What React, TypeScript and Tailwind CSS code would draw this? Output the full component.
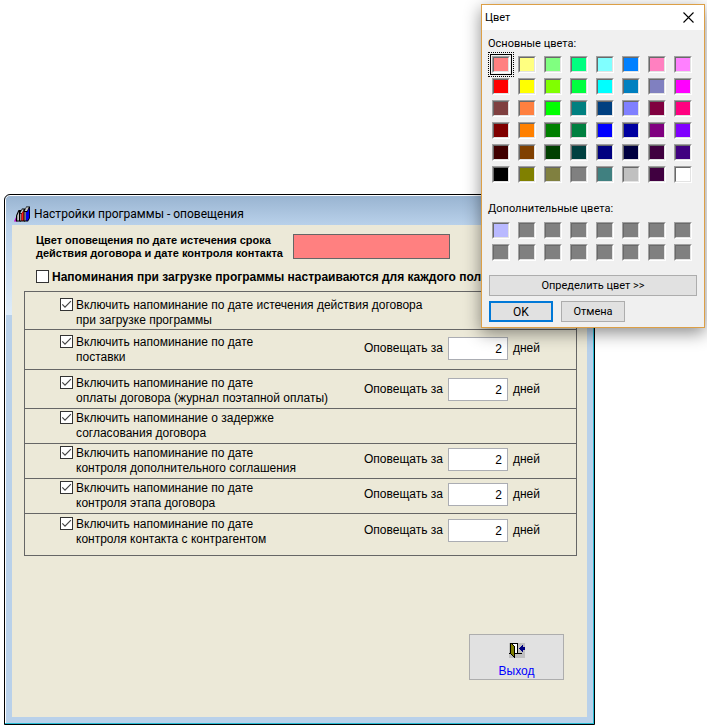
import React from "react";

type Reminder = {
  id: string;
  lines: [string, string];
  days?: number;
  row: string;
};

const reminders: Reminder[] = [
  { id: "expiry", lines: ["Включить напоминание по дате истечения действия договора", "при загрузке программы"], row: "h-[38px] pt-1.5" },
  { id: "delivery", lines: ["Включить напоминание по дате", "поставки"], days: 2, row: "h-[40px] pt-[5px]" },
  { id: "payment", lines: ["Включить напоминание по дате", "оплаты договора (журнал поэтапной оплаты)"], days: 2, row: "h-[39px] pt-1.5" },
  { id: "approval", lines: ["Включить напоминание о задержке", "согласования договора"], row: "h-[35px] pt-0.5" },
  { id: "addendum", lines: ["Включить напоминание по дате", "контроля дополнительного соглашения"], days: 2, row: "h-[35px] pt-0.5" },
  { id: "stage", lines: ["Включить напоминание по дате", "контроля этапа договора"], days: 2, row: "h-[35px] pt-0.5" },
  { id: "contact", lines: ["Включить напоминание по дате", "контроля контакта с контрагентом"], days: 2, row: "h-[42px] pt-[3px]" },
];

const basicColors = [
  "#ff8080", "#ffff80", "#80ff80", "#00ff80", "#80ffff", "#0080ff", "#ff80c0", "#ff80ff",
  "#ff0000", "#ffff00", "#80ff00", "#00ff40", "#00ffff", "#0080c0", "#8080c0", "#ff00ff",
  "#804040", "#ff8040", "#00ff00", "#008080", "#004080", "#8080ff", "#800040", "#ff0080",
  "#800000", "#ff8000", "#008000", "#008040", "#0000ff", "#0000a0", "#800080", "#8000ff",
  "#400000", "#804000", "#004000", "#004040", "#000080", "#000040", "#400040", "#400080",
  "#000000", "#808000", "#808040", "#808080", "#408080", "#c0c0c0", "#400040", "#ffffff",
];

const customColors = ["#b9b9ff", ...Array<string>(15).fill("#808080")];

function CheckBox({ id, checked = false }: { id: string; checked?: boolean }) {
  return (
    <span className="relative block size-[13px] shrink-0">
      <input
        id={id}
        type="checkbox"
        defaultChecked={checked}
        className="peer block size-[13px] appearance-none border border-[#333] bg-white"
      />
      <svg
        viewBox="0 0 13 13"
        className="pointer-events-none absolute inset-0 hidden size-[13px] peer-checked:block"
        fill="none"
        stroke="#444"
        strokeWidth="1.2"
      >
        <path d="M2.3 6.4 5 9.2 10.9 3.2" />
      </svg>
    </span>
  );
}

function ReminderRow({ id, lines, days, row }: Reminder) {
  return (
    <div className={`flex items-start border-b border-[#666] pl-[35px] text-xs leading-[15px] ${row}`}>
      <CheckBox id={id} checked />
      <label htmlFor={id} className="ml-[3px] min-w-0 flex-1 whitespace-nowrap">
        {lines[0]}
        <br />
        {lines[1]}
      </label>
      {days !== undefined && (
        <div className="mr-9 mt-0.5 flex items-center">
          <label htmlFor={`${id}-days`}>Оповещать за</label>
          <input
            id={`${id}-days`}
            type="text"
            defaultValue={days}
            className="mx-[5px] h-[23px] w-[60px] border border-[#abadb3] bg-white pr-[5px] text-right"
          />
          <span>дней</span>
        </div>
      )}
    </div>
  );
}

function Swatch({ color, selected = false }: { color: string; selected?: boolean }) {
  return (
    <button
      type="button"
      aria-label={color}
      className={`h-[17px] w-[18px] border border-b-white border-l-[#a0a0a0] border-r-white border-t-[#a0a0a0] ${
        selected ? "relative outline-1 outline-offset-1 outline-black" : ""
      }`}
    >
      <span
        className="block size-full border border-b-[#e3e3e3] border-l-[#696969] border-r-[#e3e3e3] border-t-[#696969]"
        style={{ backgroundColor: color }}
      />
      {selected && (
        <span className="pointer-events-none absolute -inset-[5px] border border-dotted border-black" />
      )}
    </button>
  );
}

function BooksIcon() {
  return (
    <svg viewBox="0 0 16 16" className="size-4 shrink-0">
      <path d="M0 15.5 2 11h1.500v4.500z" fill="#c000c0" />
      <path d="M2 15.500V9.500L4.500 4h2.500v11.500z" fill="#000" />
      <path d="M3.200 14.500V9.800L5 5.500v9z" fill="#c8c8c8" />
      <path d="M5.500 15.500V7.500L8 2.500h3v13z" fill="#000" />
      <path d="M6.300 7 8.200 3.400h1.600L8 7z" fill="#c8c8c8" />
      <path d="M6.300 7.800h1v6.700h-1z" fill="#c8c8c8" />
      <path d="M7.500 7.800 9.500 5v9.500h-2z" fill="#ff1818" />
      <path d="M10 15.500V5.500L12.200.5H16V12l-2 3.500z" fill="#000" />
      <path d="M10.700 5 12.500 1.300h2.300L13 5z" fill="#c8c8c8" />
      <path d="M10.600 6h1v8.500h-1z" fill="#c8c8c8" />
      <path d="M12 6h1.200l2-3.800v9.600l-1.700 2.700H12z" fill="#0000f0" />
    </svg>
  );
}

function ExitIcon() {
  return (
    <svg viewBox="0 0 16 16" className="size-4" shapeRendering="crispEdges">
      <path d="M0 0h16v15H0z" fill="#c0c0c0" />
      <path d="M1 0h8v10h4v1H5v-1h3V1H2v9h-2v1h1z" fill="#000" />
      <path d="M3 1h5v9H6V4L3 2z" fill="#fff" />
      <path d="M1 0h1l4 4v11H5l-4-4z" fill="#000" />
      <path d="M2 1l3 3v10l-3-3z" fill="#808000" />
      <path d="M10 5h1V4h1V3h1V2h1v2h2v3h-2v2h-1V8h-1V7h-1V6h-1z" fill="#000080" />
    </svg>
  );
}

function SettingsWindow() {
  return (
    <section className="ml-1 mr-[112px] flex h-[531px] flex-col rounded-t-md border border-black bg-[#b9d1ea] shadow-[inset_-1px_-1px_0_#27bcd4,inset_1px_1px_0_#fff]">
      <header className="mx-px mt-px flex h-[29px] shrink-0 items-center gap-1 rounded-t bg-linear-to-b from-[#99b4d1] to-[#b9d1ea] pl-2 pt-1.5 font-[Roboto,sans-serif] text-xs">
        <BooksIcon />
        <h1 className="whitespace-nowrap">Настройки программы - оповещения</h1>
      </header>
      <div className="flex min-h-0 flex-1 pb-[7px] pr-[7px]">
        <div className="ml-px h-[90px] w-1.5 shrink-0 bg-linear-to-b from-[#b9d1ea] to-[#dfedfa]" />
        <div className="flex min-w-0 flex-1 flex-col bg-[#ece9d8] pl-3 pr-2.5">
          <div className="ml-3 mt-[9px] flex items-start">
            <label htmlFor="alert-color" className="w-[257px] whitespace-nowrap text-[11px] font-bold leading-[13px]">
              Цвет оповещения по дате истечения срока
              <br />
              действия договора и дате контроля контакта
            </label>
            <button
              id="alert-color"
              type="button"
              className="h-[25px] w-[157px] border border-[#666] bg-[#ff8080]"
            />
          </div>
          <div className="ml-3 mt-[10px] flex h-[21px] items-start gap-[3px] overflow-hidden">
            <CheckBox id="per-user" />
            <label htmlFor="per-user" className="whitespace-nowrap text-xs font-bold leading-[14px]">
              Напоминания при загрузке программы настраиваются для каждого пользователя
            </label>
          </div>
          <div className="border-l border-r border-t border-[#666]">
            {reminders.map((r) => (
              <ReminderRow key={r.id} {...r} />
            ))}
          </div>
          <button
            type="button"
            className="mb-[37px] mr-[13px] mt-auto flex h-[46px] w-[95px] flex-col items-center self-end border border-[#adadad] bg-[#e1e1e1] pt-2 text-xs leading-[15px] text-[#0000ff]"
          >
            <ExitIcon />
            <span className="mt-[5px]">Выход</span>
          </button>
        </div>
      </div>
    </section>
  );
}

function ColorDialog() {
  return (
    <section
      role="dialog"
      aria-label="Цвет"
      className="absolute right-0.5 top-1 flex h-[324px] w-[224px] flex-col border border-[#dc9f46] bg-[#f0f0f0] font-[Roboto,sans-serif] text-[11px] leading-[15px] shadow-[0_5px_16px_rgba(0,0,0,0.45)]"
    >
      <header className="flex h-[25px] shrink-0 items-center justify-between bg-white pl-[3px] pr-2.5">
        <h2>Цвет</h2>
        <button type="button" aria-label="Закрыть">
          <svg viewBox="0 0 11 11" className="size-[11px]" stroke="#000" strokeWidth="1.1">
            <path d="M.5.5l10 10M10.5.5l-10 10" />
          </svg>
        </button>
      </header>
      <div className="px-[7px]">
        <h3 className="-ml-px mt-1.5">Основные цвета:</h3>
        <div className="ml-[3px] mt-[5px] grid w-[200px] grid-cols-8 gap-x-2 gap-y-[5px]">
          {basicColors.map((c, i) => (
            <Swatch key={i} color={c} selected={i === 0} />
          ))}
        </div>
        <h3 className="-ml-px mt-[18px]">Дополнительные цвета:</h3>
        <div className="ml-[3px] mt-1.5 grid w-[200px] grid-cols-8 gap-x-2 gap-y-[5px]">
          {customColors.map((c, i) => (
            <Swatch key={i} color={c} />
          ))}
        </div>
        <button type="button" className="mt-[14px] block h-[21px] w-[208px] border border-[#adadad] bg-[#e1e1e1]">
          Определить цвет &gt;&gt;
        </button>
        <div className="mt-[5px] flex gap-2">
          <button type="button" className="h-[21px] w-16 border-2 border-[#0078d7] bg-[#e1e1e1] text-xs leading-none">
            OK
          </button>
          <button type="button" className="h-[21px] w-16 border border-[#adadad] bg-[#e1e1e1]">
            Отмена
          </button>
        </div>
      </div>
    </section>
  );
}

export default function App() {
  return (
    <main className="relative min-h-screen overflow-hidden bg-white pt-[194px] font-['Liberation_Sans',Arial,sans-serif] text-black">
      <SettingsWindow />
      <ColorDialog />
    </main>
  );
}
